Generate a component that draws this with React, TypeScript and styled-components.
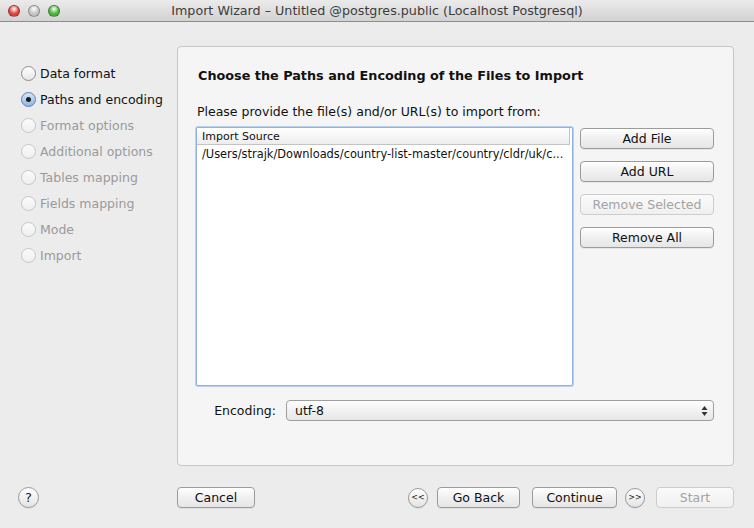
import React from "react";
import styled, { createGlobalStyle, css } from "styled-components";

const GlobalStyle = createGlobalStyle`
    html, body {
        margin: 0;
        padding: 0;
        background: #ececec;
    }
    body {
        font-family: "DejaVu Sans", "Noto Sans", sans-serif;
        font-size: 12.5px;
        color: #111;
    }
`;

const Window = styled.div`
    width: 754px;
    height: 528px;
    background: #ececec;
    display: flex;
    flex-direction: column;
    overflow: hidden;
`;

const TitleBar = styled.div`
    height: 21px;
    flex: none;
    display: flex;
    align-items: center;
    position: relative;
    background: linear-gradient(#ebebeb, #d2d2d2);
    border-bottom: 1px solid #8e8e8e;
`;

const Lights = styled.div`
    display: flex;
    gap: 8px;
    padding-left: 8px;
`;

const Light = styled.span<{ $color: string }>`
    width: 12px;
    height: 12px;
    border-radius: 50%;
    background: radial-gradient(circle at 50% 30%, #fff 0%, ${(p) => p.$color} 55%);
    border: 1px solid rgba(0, 0, 0, 0.3);
    box-sizing: border-box;
`;

const Title = styled.div`
    position: absolute;
    left: 0;
    right: 0;
    text-align: center;
    font-size: 12.7px;
    color: #3c3c3c;
    pointer-events: none;
`;

const Content = styled.div`
    display: flex;
    padding: 24px 20px 0 0;
    height: 420px;
`;

const Sidebar = styled.ul`
    list-style: none;
    margin: 0;
    padding: 14px 0 0 21px;
    width: 156px;
    flex: none;
`;

const Step = styled.li<{ $disabled?: boolean }>`
    height: 26px;
    display: flex;
    align-items: center;
    gap: 4px;
    font-size: 12.5px;
    color: ${(p) => (p.$disabled ? "#9a9a9a" : "#111")};
`;

const Radio = styled.span<{ $checked?: boolean; $disabled?: boolean }>`
    width: 15px;
    height: 15px;
    box-sizing: border-box;
    border-radius: 50%;
    display: flex;
    align-items: center;
    justify-content: center;
    border: 1px solid ${(p) => (p.$disabled ? "#c6c6c6" : p.$checked ? "#5b7fb5" : "#8e8e8e")};
    background: ${(p) =>
        p.$checked
            ? "linear-gradient(#d3e4f8, #8fb6e6)"
            : p.$disabled
            ? "linear-gradient(#fbfbfb, #efefef)"
            : "linear-gradient(#ffffff, #e6e6e6)"};
    ${(p) =>
        p.$checked &&
        css`
            &::after {
                content: "";
                width: 5px;
                height: 5px;
                border-radius: 50%;
                background: #1a1a1a;
            }
        `}
`;

const Panel = styled.div`
    flex: 1;
    box-sizing: border-box;
    background: #f5f5f5;
    border: 1px solid #c6c6c6;
    border-radius: 4px;
    padding: 20px 19px 0 18px;
    display: flex;
    flex-direction: column;
`;

const Heading = styled.h2`
    margin: 0 0 0 2px;
    font-size: 12.8px;
    font-weight: bold;
    line-height: 18px;
`;

const Instruction = styled.p`
    margin: 19px 0 7px 1px;
    font-size: 12.5px;
    line-height: 16px;
`;

const SourceRow = styled.div`
    display: flex;
    gap: 7px;
`;

const SourceList = styled.div`
    width: 377px;
    height: 259px;
    box-sizing: border-box;
    background: #fff;
    border: 1px solid #8fb2e0;
    box-shadow: 0 0 0 1px #b9d0ee;
    border-radius: 2px;
`;

const ListHeader = styled.div`
    height: 16px;
    display: flex;
    align-items: center;
    padding-left: 5px;
    font-size: 11px;
    background: linear-gradient(#ffffff, #ededed);
    border-bottom: 1px solid #c4c4c4;
    border-right: 1px solid #c4c4c4;
    margin-right: 2px;
`;

const ListItem = styled.div`
    height: 18px;
    display: flex;
    align-items: center;
    padding-left: 5px;
    font-size: 11.4px;
    white-space: nowrap;
    overflow: hidden;
`;

const ButtonColumn = styled.div`
    display: flex;
    flex-direction: column;
    gap: 12px;
    padding-top: 1px;
`;

const Button = styled.button<{ $width?: number }>`
    width: ${(p) => (p.$width ? `${p.$width}px` : "auto")};
    height: 21px;
    box-sizing: border-box;
    padding: 0 6px;
    font-family: "DejaVu Sans", "Noto Sans", sans-serif;
    font-size: 12.5px;
    color: #111;
    background: linear-gradient(#ffffff, #f0f0f0 50%, #e6e6e6);
    border: 1px solid #9b9b9b;
    border-radius: 4px;
    box-shadow: 0 1px 0 rgba(0, 0, 0, 0.06);
    white-space: nowrap;

    &:disabled {
        color: #a3a3a3;
        border-color: #cdcdcd;
        background: linear-gradient(#fafafa, #f0f0f0);
        box-shadow: none;
    }
`;

const EncodingRow = styled.div`
    display: flex;
    align-items: center;
    gap: 10px;
    margin-top: 14px;
`;

const EncodingLabel = styled.label`
    width: 80px;
    text-align: right;
    font-size: 12.5px;
`;

const Select = styled.div`
    flex: 1;
    height: 21px;
    box-sizing: border-box;
    display: flex;
    align-items: center;
    justify-content: space-between;
    padding: 0 5px 0 8px;
    border: 1px solid #9e9e9e;
    border-radius: 4px;
    background: linear-gradient(#ffffff, #f1f1f1 50%, #e7e7e7);
    font-size: 12.5px;
`;

const Footer = styled.div`
    display: flex;
    align-items: center;
    height: 21px;
    margin-top: 21px;
    padding-right: 20px;
`;

const HelpSlot = styled.div`
    width: 177px;
    flex: none;
    padding-left: 18px;
    box-sizing: border-box;
`;

const RoundButton = styled.button<{ $size: number; $font: number }>`
    width: ${(p) => p.$size}px;
    height: ${(p) => p.$size}px;
    padding: 0;
    border-radius: 50%;
    border: 1px solid #9a9a9a;
    background: linear-gradient(#ffffff, #e4e4e4);
    font-family: "DejaVu Sans", sans-serif;
    font-size: ${(p) => p.$font}px;
    color: #222;
    display: flex;
    align-items: center;
    justify-content: center;
    box-shadow: 0 1px 0 rgba(0, 0, 0, 0.06);
`;

const Spacer = styled.div`
    flex: 1;
`;

const NavGroup = styled.div`
    display: flex;
    align-items: center;
`;

const NavGap = styled.span<{ $w: number }>`
    width: ${(p) => p.$w}px;
    flex: none;
`;

const steps = [
    { label: "Data format" },
    { label: "Paths and encoding", checked: true },
    { label: "Format options", disabled: true },
    { label: "Additional options", disabled: true },
    { label: "Tables mapping", disabled: true },
    { label: "Fields mapping", disabled: true },
    { label: "Mode", disabled: true },
    { label: "Import", disabled: true },
];

const SelectArrows: React.FC = () => (
    <svg width="7" height="12" viewBox="0 0 7 12">
        <path d="M3.5 1 L6.5 5 L0.5 5 Z" fill="#333" />
        <path d="M3.5 11 L6.5 7 L0.5 7 Z" fill="#333" />
    </svg>
);

const App: React.FC = () => {
    return (
        <Window>
            <GlobalStyle />
            <TitleBar>
                <Lights>
                    <Light $color="#e0443e" />
                    <Light $color="#c4c4c4" />
                    <Light $color="#4cb43d" />
                </Lights>
                <Title>Import Wizard – Untitled @postgres.public (Localhost Postgresql)</Title>
            </TitleBar>

            <Content>
                <Sidebar>
                    {steps.map((step) => (
                        <Step key={step.label} $disabled={step.disabled}>
                            <Radio $checked={step.checked} $disabled={step.disabled} />
                            {step.label}
                        </Step>
                    ))}
                </Sidebar>

                <Panel>
                    <Heading>Choose the Paths and Encoding of the Files to Import</Heading>
                    <Instruction>Please provide the file(s) and/or URL(s) to import from:</Instruction>

                    <SourceRow>
                        <SourceList>
                            <ListHeader>Import Source</ListHeader>
                            <ListItem>/Users/strajk/Downloads/country-list-master/country/cldr/uk/c...</ListItem>
                        </SourceList>
                        <ButtonColumn>
                            <Button $width={134}>Add File</Button>
                            <Button $width={134}>Add URL</Button>
                            <Button $width={134} disabled>
                                Remove Selected
                            </Button>
                            <Button $width={134}>Remove All</Button>
                        </ButtonColumn>
                    </SourceRow>

                    <EncodingRow>
                        <EncodingLabel>Encoding:</EncodingLabel>
                        <Select>
                            utf-8
                            <SelectArrows />
                        </Select>
                    </EncodingRow>
                </Panel>
            </Content>

            <Footer>
                <HelpSlot>
                    <RoundButton $size={21} $font={13}>?</RoundButton>
                </HelpSlot>
                <Button $width={78}>Cancel</Button>
                <Spacer />
                <NavGroup>
                    <RoundButton $size={20} $font={8}>&lt;&lt;</RoundButton>
                    <NavGap $w={9} />
                    <Button $width={83}>Go Back</Button>
                    <NavGap $w={12} />
                    <Button $width={85}>Continue</Button>
                    <NavGap $w={8} />
                    <RoundButton $size={20} $font={8}>&gt;&gt;</RoundButton>
                    <NavGap $w={11} />
                    <Button $width={78} disabled>
                        Start
                    </Button>
                </NavGroup>
            </Footer>
        </Window>
    );
};

export default App;
